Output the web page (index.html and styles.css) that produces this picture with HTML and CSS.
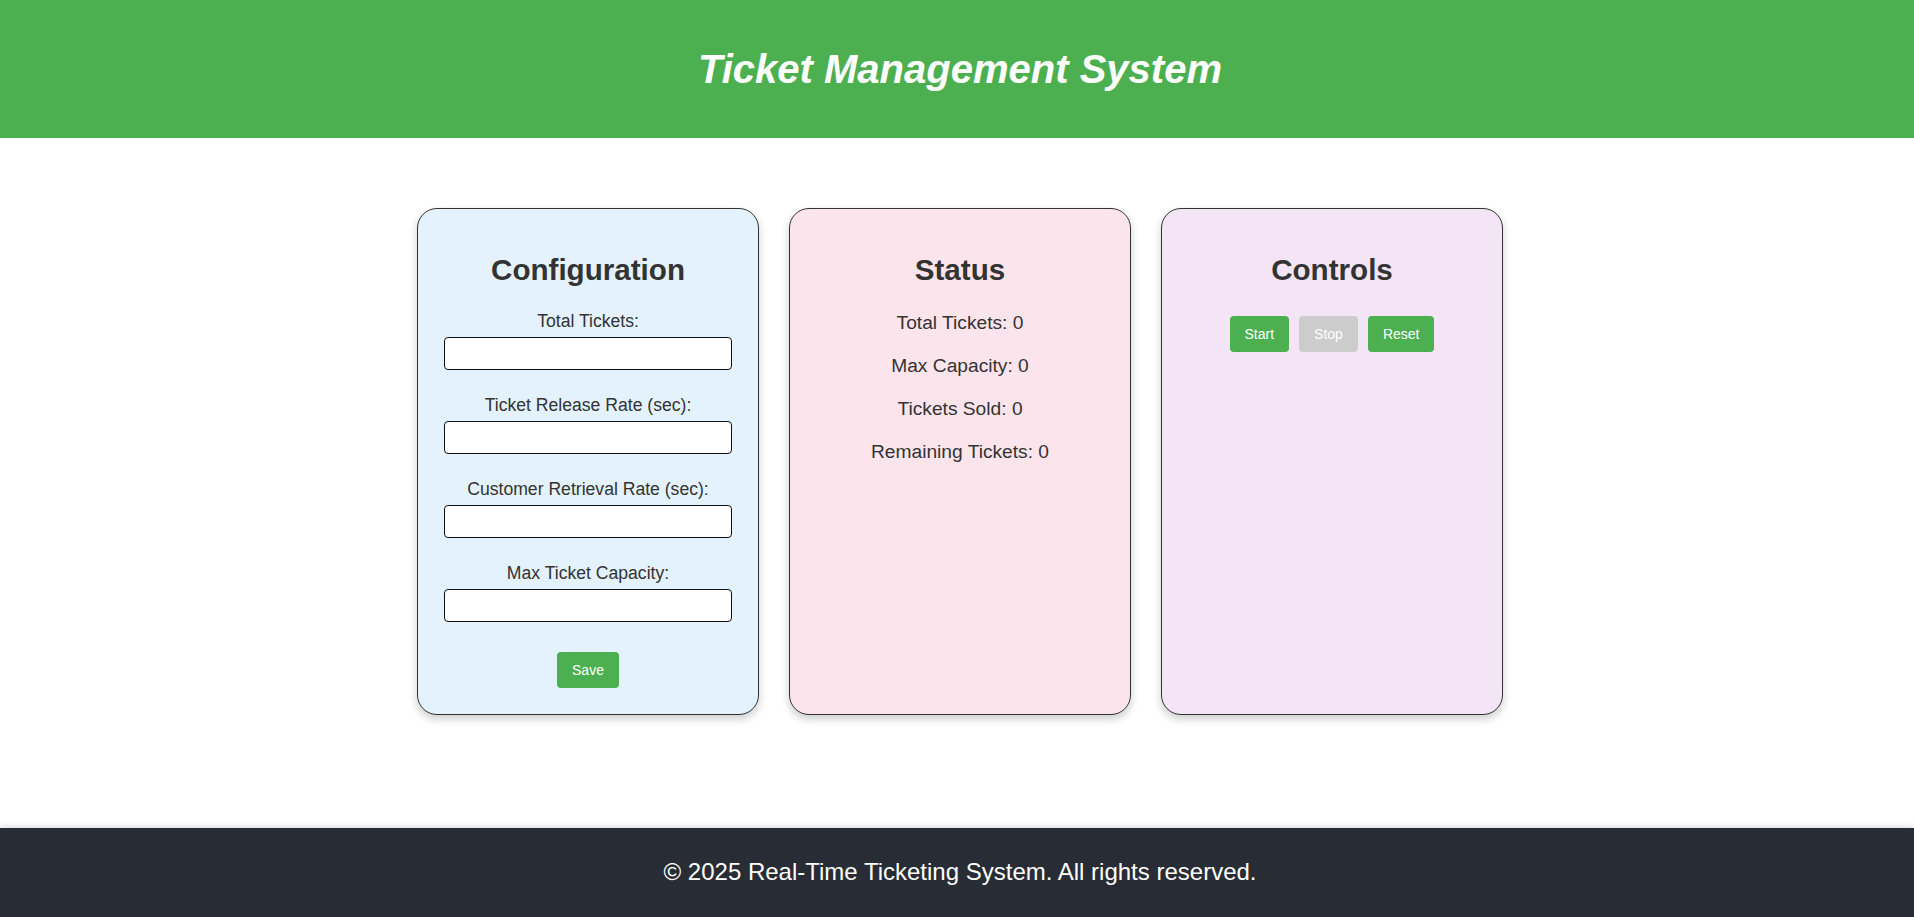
FILE: index.html
```html
<!DOCTYPE html>
<html lang="en">
<head>
<meta charset="utf-8">
<title>Ticket Management System</title>
<link rel="stylesheet" href="styles.css">
</head>
<body>
<header class="app-header">
  <h1 class="app-title">Ticket Management System</h1>
</header>
<main class="dashboard">
  <section class="card card-config">
    <h2 class="card-title">Configuration</h2>
    <form class="config-form">
      <div class="field">
        <label class="field-label" for="total">Total Tickets:</label>
        <input class="field-input" id="total" type="number">
      </div>
      <div class="field">
        <label class="field-label" for="release">Ticket Release Rate (sec):</label>
        <input class="field-input" id="release" type="number">
      </div>
      <div class="field">
        <label class="field-label" for="retrieval">Customer Retrieval Rate (sec):</label>
        <input class="field-input" id="retrieval" type="number">
      </div>
      <div class="field">
        <label class="field-label" for="capacity">Max Ticket Capacity:</label>
        <input class="field-input" id="capacity" type="number">
      </div>
      <button type="button" class="btn btn-save">Save</button>
    </form>
  </section>
  <section class="card card-status">
    <h2 class="card-title">Status</h2>
    <div class="stats">
      <p class="stat">Total Tickets: 0</p>
      <p class="stat">Max Capacity: 0</p>
      <p class="stat">Tickets Sold: 0</p>
      <p class="stat">Remaining Tickets: 0</p>
    </div>
  </section>
  <section class="card card-controls">
    <h2 class="card-title">Controls</h2>
    <div class="control-buttons">
      <button type="button" class="btn">Start</button>
      <button type="button" class="btn btn-disabled" disabled>Stop</button>
      <button type="button" class="btn">Reset</button>
    </div>
  </section>
</main>
<footer class="app-footer">
  <p class="footer-text">© 2025 Real-Time Ticketing System. All rights reserved.</p>
</footer>
</body>
</html>
```
FILE: styles.css
```css
* {
  box-sizing: border-box;
}

html, body {
  margin: 0;
  padding: 0;
}

body {
  font-family: "Liberation Sans", Arial, sans-serif;
  color: #333;
  background: #fff;
  min-height: 100vh;
  display: flex;
  flex-direction: column;
}

.app-header {
  background: #4caf50;
  padding: 46px 0 46px 6px;
  text-align: center;
}

.app-title {
  margin: 0;
  font-size: 40px;
  font-style: italic;
  font-weight: bold;
  color: #fff;
  line-height: 46px;
}

.dashboard {
  flex: 1;
  display: flex;
  justify-content: center;
  align-items: flex-start;
  padding: 70px 0 0 6px;
}

.card {
  width: 342px;
  height: 507px;
  margin: 0 15px;
  padding: 20px;
  border: 1px solid #333;
  border-radius: 20px;
  box-shadow: 0 4px 8px rgba(0, 0, 0, 0.2);
  text-align: center;
}

.card-config {
  background: #e3f2fd;
}

.card-status {
  background: #fce4ec;
}

.card-controls {
  background: #f3e5f5;
}

.card-title {
  font-size: 29.6px;
  line-height: 34px;
  font-weight: bold;
  margin: 23.6px 0 24.6px;
  color: #333;
}

.config-form {
  margin: 0;
}

.field {
  margin-bottom: 25px;
}

.field-label {
  display: block;
  font-size: 17.6px;
  line-height: 20px;
  margin-bottom: 6px;
  color: #333;
}

.field-input {
  display: block;
  width: 288px;
  height: 33px;
  margin: 0 auto;
  padding: 8px;
  border: 1px solid #111;
  border-radius: 4px;
  background: #fff;
  font-size: 13.33px;
  font-family: "Liberation Sans", Arial, sans-serif;
}

.btn {
  font-family: "Liberation Sans", Arial, sans-serif;
  font-size: 14px;
  line-height: 16px;
  padding: 10px 15px;
  border: none;
  border-radius: 4px;
  background: #4caf50;
  color: #fff;
  cursor: pointer;
}

.btn-save {
  margin: 5px;
}

.btn-disabled {
  background: #ccc;
  color: #fff;
  cursor: not-allowed;
}

.control-buttons {
  display: flex;
  justify-content: center;
  gap: 10px;
  padding-top: 5px;
}

.stats {
  padding-top: 1px;
}

.stat {
  font-size: 19.2px;
  line-height: 22px;
  margin: 0 0 21px;
  color: #333;
}

.app-footer {
  background: #282c34;
  color: #fff;
  text-align: center;
  padding: 30px 0 31px 6px;
  box-shadow: 0 -2px 5px rgba(0, 0, 0, 0.12);
}

.footer-text {
  margin: 0;
  font-size: 24px;
  line-height: 28px;
}
```
